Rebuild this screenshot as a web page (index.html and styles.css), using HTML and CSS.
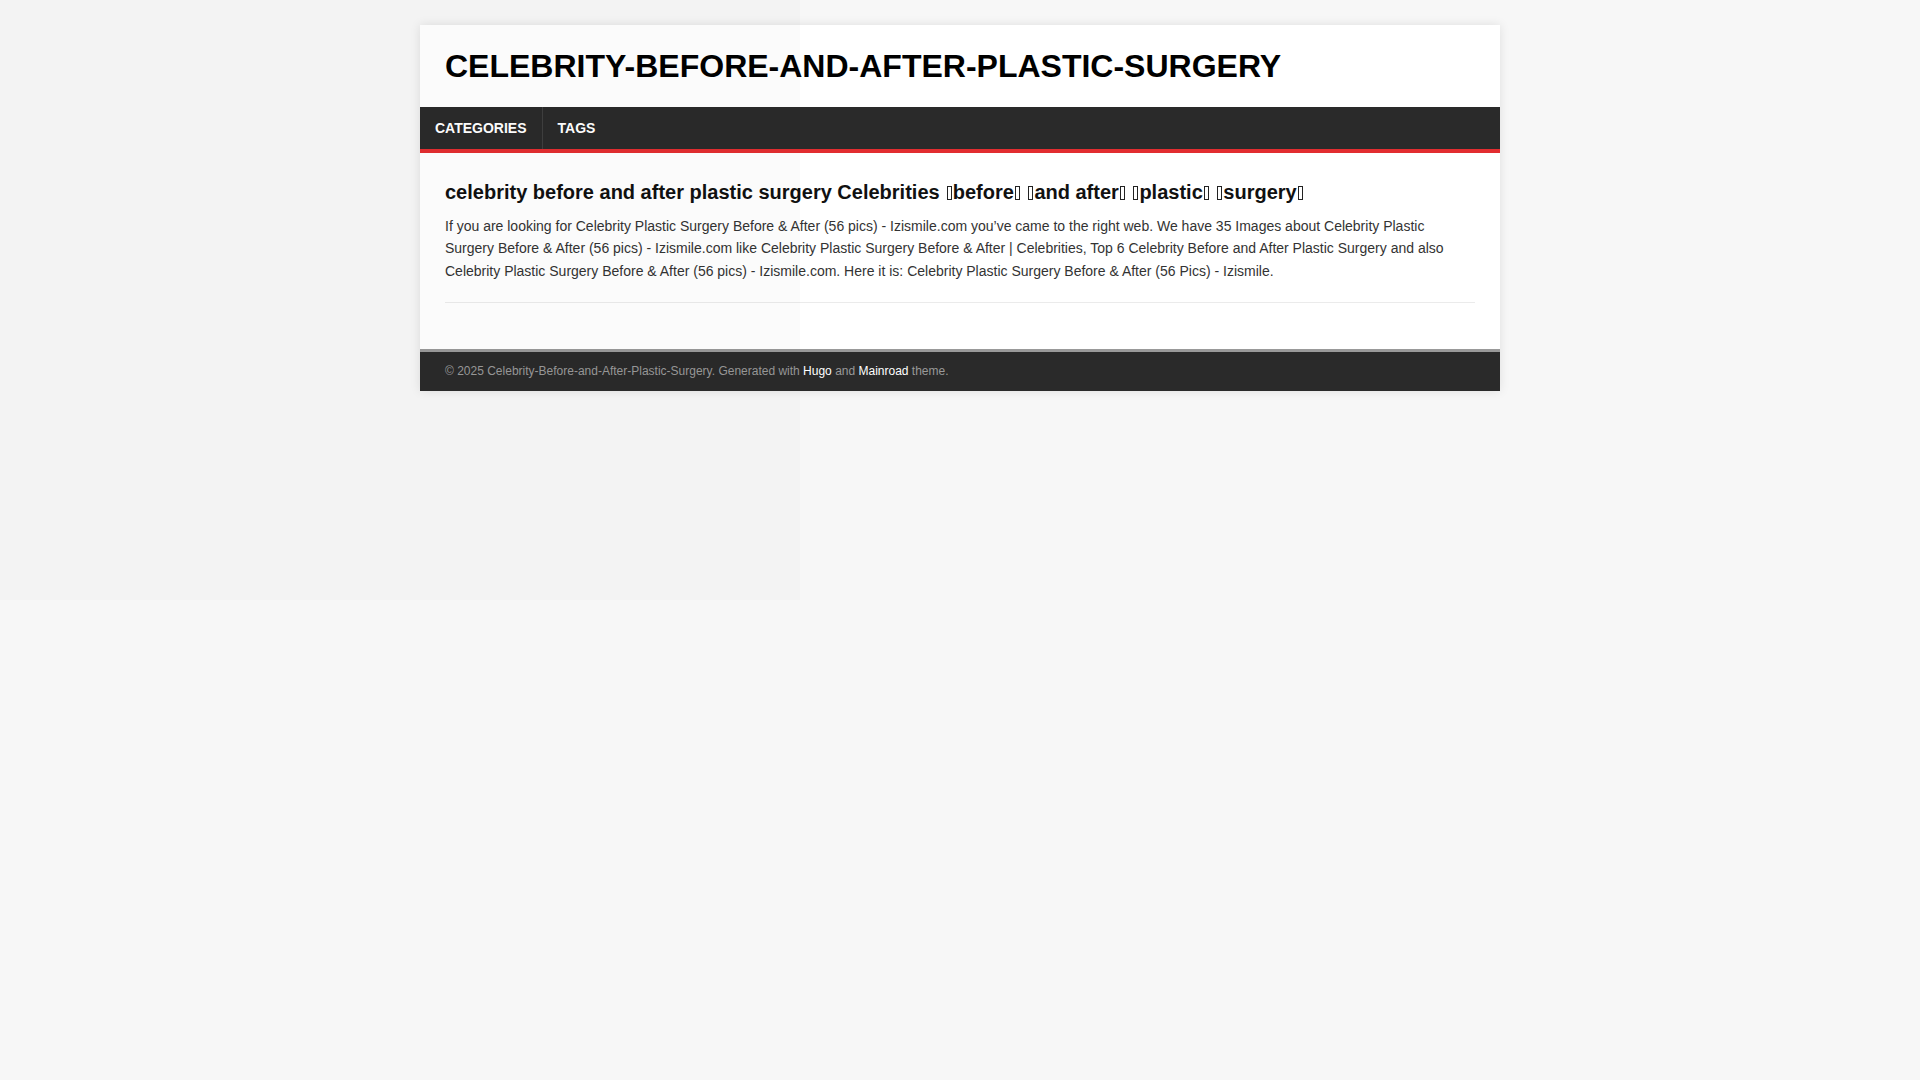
FILE: index.html
```html
<!DOCTYPE html>
<html lang="en">
<head>
<meta charset="utf-8">
<title>Celebrity-Before-and-After-Plastic-Surgery</title>
<link rel="stylesheet" href="styles.css">
</head>
<body>
<div class="container">
  <header class="header">
    <a class="logo" href="#">CELEBRITY-BEFORE-AND-AFTER-PLASTIC-SURGERY</a>
  </header>
  <nav class="menu">
    <a class="menu__link" href="#">CATEGORIES</a>
    <a class="menu__link" href="#">TAGS</a>
  </nav>
  <main class="main">
    <article class="post">
      <h1 class="post__title">celebrity before and after plastic surgery Celebrities <span class="tofu"></span>before<span class="tofu"></span> <span class="tofu"></span>and after<span class="tofu"></span> <span class="tofu"></span>plastic<span class="tofu"></span> <span class="tofu"></span>surgery<span class="tofu"></span></h1>
      <p class="post__text">If you are looking for Celebrity Plastic Surgery Before &amp; After (56 pics) - Izismile.com you’ve came to the right web. We have 35 Images about Celebrity Plastic Surgery Before &amp; After (56 pics) - Izismile.com like Celebrity Plastic Surgery Before &amp; After | Celebrities, Top 6 Celebrity Before and After Plastic Surgery and also Celebrity Plastic Surgery Before &amp; After (56 pics) - Izismile.com. Here it is: Celebrity Plastic Surgery Before &amp; After (56 Pics) - Izismile.</p>
    </article>
  </main>
  <footer class="footer">© 2025 Celebrity-Before-and-After-Plastic-Surgery. Generated with <a href="#">Hugo</a> and <a href="#">Mainroad</a> theme.</footer>
</div>
<div class="overlay"></div>
</body>
</html>
```

FILE: styles.css
```css
html, body {
  margin: 0;
  padding: 0;
}
body {
  background: #f7f7f7;
  font-family: "Liberation Sans", Arial, Helvetica, sans-serif;
  color: #333;
  min-height: 1080px;
}
.container {
  width: 1080px;
  margin: 25px auto 0;
  background: #fff;
  box-shadow: 0 0 10px rgba(0, 0, 0, 0.1);
}
.header {
  padding: 25px;
}
.logo {
  display: block;
  font-size: 32px;
  line-height: 32px;
  font-weight: 700;
  color: #000;
  text-decoration: none;
}
.menu {
  display: flex;
  background: #2a2a2a;
  border-bottom: 4px solid #e22d30;
}
.menu__link {
  display: block;
  padding: 0 15px;
  line-height: 42px;
  font-size: 14px;
  font-weight: 700;
  color: #fff;
  text-decoration: none;
  border-left: 1px solid #3f3f3f;
}
.menu__link:first-child {
  border-left: 0;
}
.main {
  padding: 25px 25px 26px;
}
.post {
  padding-bottom: 20px;
  border-bottom: 1px solid #ebebeb;
  margin-bottom: 20px;
}
.post__title {
  margin: 0 0 9px;
  font-size: 20px;
  line-height: 28px;
  font-weight: 700;
  color: #111;
}
.tofu {
  display: inline-block;
  box-sizing: border-box;
  width: 5px;
  height: 14px;
  border: 1px solid #222;
  margin: 0 1px 0 1.5px;
  vertical-align: -1px;
}
.post__text {
  margin: 0;
  font-size: 14px;
  line-height: 22.4px;
}
.footer {
  background: #2a2a2a;
  border-top: 3px solid #999;
  padding: 10px 25px 10px;
  font-size: 12px;
  line-height: 19px;
  color: #999;
}
.footer a {
  color: #fff;
  text-decoration: none;
}
.overlay {
  position: absolute;
  left: 0;
  top: 0;
  width: 800px;
  height: 600px;
  background: rgba(0, 0, 0, 0.014);
  pointer-events: none;
}
```
